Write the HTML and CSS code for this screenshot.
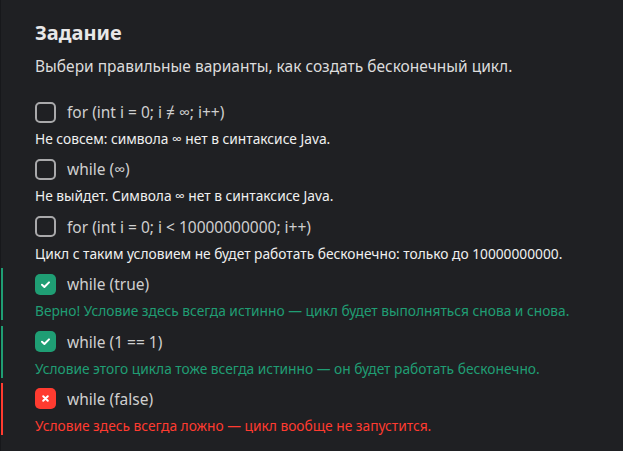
FILE: index.html
```html
<!DOCTYPE html>
<html lang="ru">
<head>
<meta charset="utf-8">
<link rel="stylesheet" href="styles.css">
</head>
<body>
<div class="page">
  <h1 class="title">Задание</h1>
  <p class="lead">Выбери правильные варианты, как создать бесконечный цикл.</p>
  <div class="options">
    <div class="option">
      <div class="row"><span class="box"></span><span class="label">for (int i = 0; i ≠ ∞; i++)</span></div>
      <div class="fb">Не совсем: символа ∞ нет в синтаксисе Java.</div>
    </div>
    <div class="option">
      <div class="row"><span class="box"></span><span class="label">while (∞)</span></div>
      <div class="fb">Не выйдет. Символа ∞ нет в синтаксисе Java.</div>
    </div>
    <div class="option">
      <div class="row"><span class="box"></span><span class="label">for (int i = 0; i &lt; 10000000000; i++)</span></div>
      <div class="fb">Цикл с таким условием не будет работать бесконечно: только до 10000000000.</div>
    </div>
    <div class="option ok">
      <div class="row"><span class="box"><svg viewBox="0 0 21 21" width="21" height="21"><path d="M7 10.8l2.4 2.2 4.6-4.6" fill="none" stroke="#fff" stroke-width="2" stroke-linecap="round" stroke-linejoin="round"/></svg></span><span class="label">while (true)</span></div>
      <div class="fb">Верно! Условие здесь всегда истинно — цикл будет выполняться снова и снова.</div>
    </div>
    <div class="option ok">
      <div class="row"><span class="box"><svg viewBox="0 0 21 21" width="21" height="21"><path d="M7 10.8l2.4 2.2 4.6-4.6" fill="none" stroke="#fff" stroke-width="2" stroke-linecap="round" stroke-linejoin="round"/></svg></span><span class="label">while (1 == 1)</span></div>
      <div class="fb">Условие этого цикла тоже всегда истинно — он будет работать бесконечно.</div>
    </div>
    <div class="option bad">
      <div class="row"><span class="box"><svg viewBox="0 0 21 21" width="21" height="21"><path d="M8.2 8.2l4.6 4.6M12.8 8.2l-4.6 4.6" fill="none" stroke="#fff" stroke-width="2" stroke-linecap="round"/></svg></span><span class="label">while (false)</span></div>
      <div class="fb">Условие здесь всегда ложно — цикл вообще не запустится.</div>
    </div>
  </div>
</div>
</body>
</html>
```

FILE: styles.css
```css
html, body {
  margin: 0;
  padding: 0;
  background: #1f2023;
}
body {
  width: 623px;
  height: 451px;
  overflow: hidden;
  font-family: "Noto Sans", "Open Sans", sans-serif;
}
.page {
  box-sizing: border-box;
  height: 451px;
  border-left: 1px solid #17181b;
  padding: 20px 0 0 0;
}
.title {
  margin: 0 0 0 34px;
  font-size: 20px;
  line-height: 26px;
  font-weight: 700;
  color: #e8e8e8;
}
.lead {
  margin: 10px 0 0 34px;
  font-size: 15.5px;
  line-height: 20px;
  color: #dcdcdc;
}
.options {
  margin-top: 20px;
  display: flex;
  flex-direction: column;
  gap: 5.4px;
}
.option {
  padding: 5px 0 0 34px;
  border-left: 2px solid transparent;
}
.option.ok { border-left-color: #1f9e74; }
.option.bad { border-left-color: #ff3b30; }
.row {
  display: flex;
  align-items: center;
  height: 22px;
  gap: 11px;
  margin-left: -2px;
}
.box {
  box-sizing: border-box;
  width: 21px;
  height: 21px;
  border: 2px solid #a9a9ab;
  border-radius: 5px;
  display: flex;
}
.ok .box { background: #1f9e74; border: none; }
.bad .box { background: #ff3b30; border: none; }
.label {
  font-size: 15.5px;
  color: #cfcfcf;
  font-weight: 400;
}
.fb {
  margin: 7px 0 0 -2px;
  font-size: 13.75px;
  line-height: 18px;
  color: #f0f0f0;
  font-weight: 400;
}
.ok .fb { color: #1f9e74; }
.bad .fb { color: #ff3b30; }
```
